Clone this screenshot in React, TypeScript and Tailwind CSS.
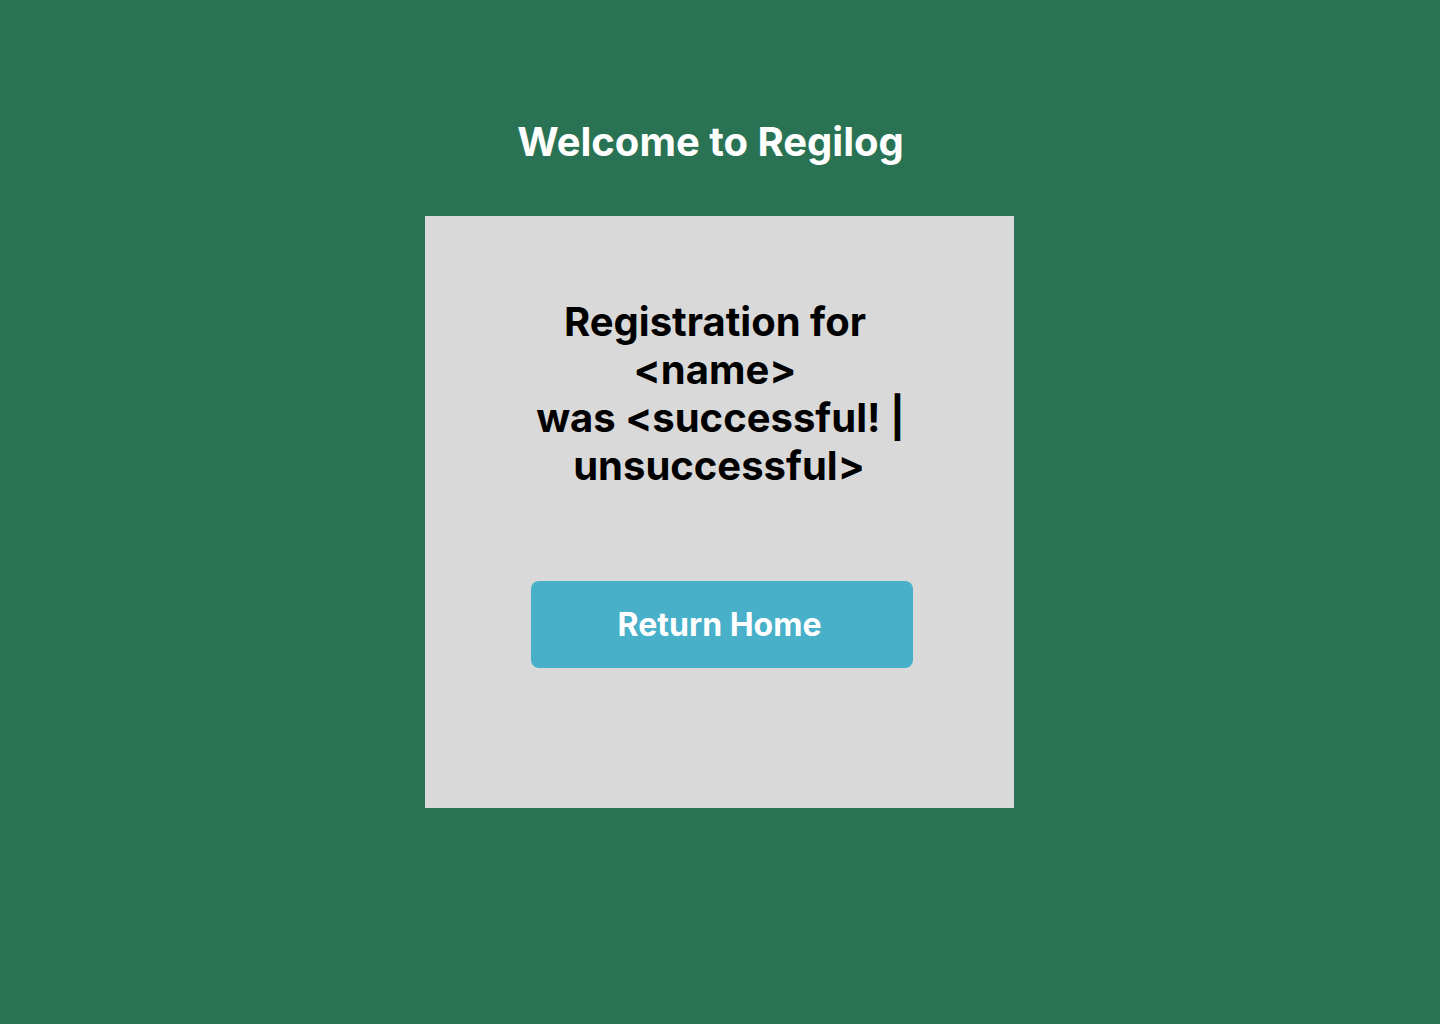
export default function App() {
  return (
    <div
      className="min-h-[1024px] w-full bg-[#297354] flex flex-col items-center"
      style={{ fontFamily: "Inter, 'Noto Sans', sans-serif" }}
    >
      <h1 className="mt-[116px] h-[52px] text-[40px] leading-[52px] font-bold text-white ml-[-19px]">
        Welcome to Regilog
      </h1>
      <div className="mt-[48px] ml-[-2px] w-[589px] h-[592px] bg-[#d9d9d9] flex flex-col items-center">
        <div className="mt-[82px] text-[40px] leading-[48px] font-bold text-black text-center flex flex-col items-center">
          <span className="mr-[8px]">Registration for</span>
          <span className="mr-[8px]">&lt;name&gt;</span>
          <span className="ml-[3px]">was &lt;successful! |</span>
          <span className="ml-[0px]">unsuccessful&gt;</span>
        </div>
        <button className="mt-[91px] ml-[5px] w-[382px] h-[87px] rounded-[8px] bg-[#48b0c9] text-white text-[32px] font-bold pr-[4px]">
          Return Home
        </button>
      </div>
    </div>
  );
}
